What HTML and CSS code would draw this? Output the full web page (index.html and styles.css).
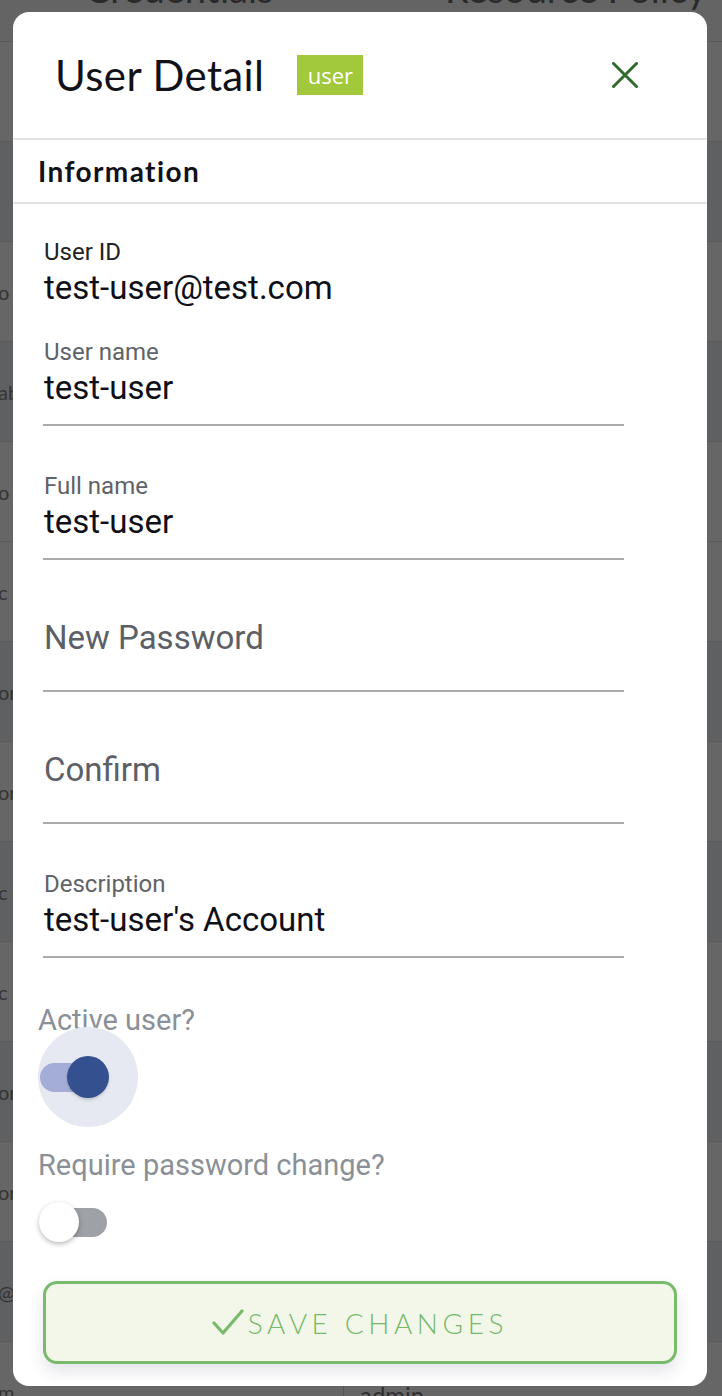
FILE: index.html
```html
<!DOCTYPE html>
<html lang="en">
<head>
<meta charset="utf-8">
<title>User Detail</title>
<link rel="stylesheet" href="styles.css">
</head>
<body>
<div class="page">
  <div class="bg-head">
    <span class="bg-h1">Credentials</span>
    <span class="bg-h2">Resource Policy</span>
  </div>
  <div class="bg-row"><span class="frag"></span><span class="cell2"></span></div>
  <div class="bg-row dark"><span class="frag"></span><span class="cell2"></span></div>
  <div class="bg-row"><span class="frag">o</span><span class="cell2"></span></div>
  <div class="bg-row dark"><span class="frag">ab</span><span class="cell2"></span></div>
  <div class="bg-row"><span class="frag">o</span><span class="cell2"></span></div>
  <div class="bg-row"><span class="frag">c</span><span class="cell2"></span></div>
  <div class="bg-row dark"><span class="frag">on</span><span class="cell2"></span></div>
  <div class="bg-row"><span class="frag">on</span><span class="cell2"></span></div>
  <div class="bg-row dark"><span class="frag">c</span><span class="cell2"></span></div>
  <div class="bg-row"><span class="frag">c</span><span class="cell2"></span></div>
  <div class="bg-row dark"><span class="frag">on</span><span class="cell2"></span></div>
  <div class="bg-row"><span class="frag">on</span><span class="cell2"></span></div>
  <div class="bg-row dark"><span class="frag">@</span><span class="cell2"></span></div>
  <div class="bg-row"><span class="frag">m</span><span class="cell2">admin</span></div>
</div>

<div class="modal">
  <div class="modal-head">
    <h1 class="title">User Detail</h1>
    <span class="badge">user</span>
    <button class="close" aria-label="Close">
      <svg width="26" height="26" viewBox="0 0 26 26"><path d="M1.5 1.5 L24.5 24.5 M24.5 1.5 L1.5 24.5" stroke="#2f6b2c" stroke-width="3" stroke-linecap="round" fill="none"/></svg>
    </button>
  </div>
  <div class="section-title">Information</div>
  <div class="modal-body">
    <div class="field plain">
      <div class="label dark">User ID</div>
      <div class="value">test-user@test.com</div>
    </div>
    <div class="field">
      <div class="label">User name</div>
      <div class="value">test-user</div>
    </div>
    <div class="field">
      <div class="label">Full name</div>
      <div class="value">test-user</div>
    </div>
    <div class="field empty">
      <div class="placeholder">New Password</div>
    </div>
    <div class="field empty">
      <div class="placeholder">Confirm</div>
    </div>
    <div class="field">
      <div class="label">Description</div>
      <div class="value">test-user's Account</div>
    </div>

    <div class="switch-label">Active user?</div>
    <div class="switch on">
      <span class="halo"></span>
      <span class="track"></span>
      <span class="knob"></span>
    </div>

    <div class="switch-label second">Require password change?</div>
    <div class="switch off">
      <span class="track"></span>
      <span class="knob"></span>
    </div>

    <button class="save">
      <svg width="32" height="28" viewBox="0 0 32 28"><path d="M2 15 L11 25 L30 3" stroke="#78b96c" stroke-width="3.2" stroke-linecap="round" stroke-linejoin="round" fill="none"/></svg>
      <span>SAVE CHANGES</span>
    </button>
  </div>
</div>
</body>
</html>
```

FILE: styles.css
```css
html, body {
  margin: 0;
  padding: 0;
}
body {
  width: 722px;
  height: 1396px;
  overflow: hidden;
  background: #646464;
  font-family: Roboto, "Liberation Sans", sans-serif;
  position: relative;
}

/* dimmed page behind the dialog */
.page {
  width: 722px;
}
.bg-head {
  height: 42px;
  display: grid;
  grid-template-columns: 343px 1fr;
  border-bottom: 1px solid #5b5b5b;
  overflow: hidden;
  box-sizing: border-box;
  font-family: Lato, sans-serif;
  font-size: 38px;
  line-height: 38px;
  color: #2a2a2a;
}
.bg-h1 { padding-left: 85px; margin-top: -31px; }
.bg-h2 { padding-left: 102px; margin-top: -31px; white-space: nowrap; }
.bg-row {
  height: 100px;
  display: grid;
  grid-template-columns: 343px 1fr;
  border-bottom: 1px solid #5a5a5a;
  box-sizing: border-box;
  background: #666666;
  font-family: Lato, sans-serif;
  font-size: 20px;
  color: #333;
}
.bg-row.dark { background: #5f6062; }
.frag {
  align-self: center;
  margin-left: -2px;
}
.cell2 {
  border-left: 1px solid #555;
  padding-left: 16px;
  align-self: stretch;
  display: flex;
  align-items: center;
  font-size: 24px;
  color: #2e2e2e;
}
.bg-row:last-child .cell2 { align-items: flex-start; padding-top: 38px; }

/* dialog */
.modal {
  position: absolute;
  left: 13px;
  top: 12px;
  width: 694px;
  height: 1374px;
  background: #fff;
  border-radius: 16px;
  display: flex;
  flex-direction: column;
  overflow: hidden;
}
.modal-head {
  height: 128px;
  box-sizing: border-box;
  border-bottom: 2px solid #e2e2e2;
  display: flex;
  align-items: center;
  padding-left: 42px;
}
.title {
  margin: 0;
  font-family: Lato, sans-serif;
  font-weight: 400;
  font-size: 42px;
  color: #111118;
  letter-spacing: 0.4px;
}
.badge {
  margin-left: 33px;
  width: 66px;
  height: 40px;
  background: #a2c83c;
  color: #fff;
  font-family: "Open Sans", sans-serif;
  font-size: 22px;
  display: flex;
  align-items: center;
  justify-content: center;
  line-height: 1;
}
.close {
  margin-left: auto;
  margin-right: 69px;
  background: none;
  border: 0;
  padding: 0;
  width: 26px;
  height: 26px;
  display: flex;
}
.section-title {
  height: 64px;
  box-sizing: border-box;
  border-bottom: 2px solid #e2e2e2;
  padding-left: 25px;
  display: flex;
  align-items: center;
  font-family: Lato, sans-serif;
  font-weight: 700;
  font-size: 28px;
  letter-spacing: 1.4px;
  color: #111118;
}
.modal-body {
  padding: 36px 0 0 25px;
  display: flex;
  flex-direction: column;
  align-items: flex-start;
}
.field {
  width: 581px;
  margin-left: 5px;
  border-bottom: 2px solid #ababab;
  padding-bottom: 19px;
  margin-bottom: 48px;
}
.field.plain {
  border-bottom: 0;
  padding-bottom: 0;
  margin-bottom: 35px;
}
.label {
  font-size: 24px;
  line-height: 24px;
  color: #5f6368;
  padding-left: 1px;
}
.label.dark { color: #222; }
.value {
  margin-top: 7px;
  font-size: 33px;
  line-height: 34px;
  color: #0f0f17;
  padding-left: 1px;
}
.field.empty {
  padding-top: 13px;
  padding-bottom: 35px;
}
.placeholder {
  font-size: 33px;
  line-height: 34px;
  color: #5c6066;
  padding-left: 1px;
}
.switch-label {
  font-size: 29px;
  line-height: 28px;
  color: #8a9097;
}
.switch-label.second { margin-top: 24px; }
.switch {
  position: relative;
  width: 100px;
}
.switch.on {
  height: 100px;
  margin-top: -7px;
}
.switch.off {
  height: 40px;
  margin-top: 23px;
}
.halo {
  position: absolute;
  left: 0;
  top: 0;
  width: 100px;
  height: 100px;
  border-radius: 50%;
  background: #e7e9f2;
}
.track {
  position: absolute;
  left: 2px;
  width: 67px;
  height: 29px;
  border-radius: 15px;
}
.switch.on .track { top: 36px; background: #a3add6; }
.switch.off .track { top: 6px; background: #9ea1a5; }
.knob {
  position: absolute;
  border-radius: 50%;
}
.switch.on .knob {
  left: 29px;
  top: 29px;
  width: 42px;
  height: 42px;
  background: #34508f;
  box-shadow: 0 2px 3px rgba(0,0,0,0.15);
}
.switch.off .knob {
  left: 1px;
  top: 0;
  width: 40px;
  height: 40px;
  background: #fff;
  box-shadow: 0 2px 5px rgba(0,0,0,0.28);
}
.save {
  margin-top: 39px;
  margin-left: 5px;
  width: 634px;
  height: 83px;
  box-sizing: border-box;
  border: 3px solid #7aba6d;
  border-radius: 14px;
  background: #f3f7e9;
  display: flex;
  align-items: center;
  justify-content: center;
  gap: 4px;
  box-shadow: 0 8px 16px rgba(40,50,90,0.12);
  font-family: Lato, sans-serif;
  font-weight: 300;
  font-size: 28px;
  letter-spacing: 4.6px;
  color: #76b96a;
  padding: 0;
}
.save svg { margin-bottom: 2px; }
```
